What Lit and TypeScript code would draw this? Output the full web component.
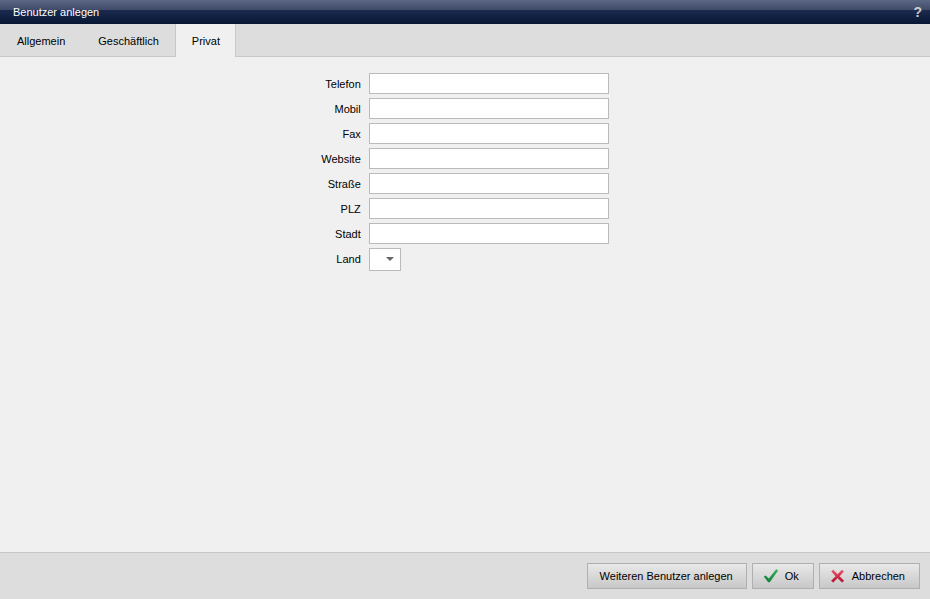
import { LitElement, css, html, svg } from "lit";
import { customElement, state } from "lit/decorators.js";
import { classMap } from "lit/directives/class-map.js";

const TABS = ["Allgemein", "Geschäftlich", "Privat"];

const FIELDS = [
  { id: "phone", label: "Telefon" },
  { id: "mobile", label: "Mobil" },
  { id: "fax", label: "Fax" },
  { id: "website", label: "Website" },
  { id: "street", label: "Straße" },
  { id: "zip", label: "PLZ" },
  { id: "city", label: "Stadt" },
];

const checkIcon = html`<svg class="icon" viewBox="0 0 16 16" aria-hidden="true">
  ${svg`<defs><linearGradient id="green" x1="0" y1="1" x2="1" y2="0">
      <stop offset="0" stop-color="#087c38" /><stop offset="1" stop-color="#3fb25c" />
    </linearGradient></defs>
    <path d="M0.8 8.6 L2.6 7.4 L5.8 10.6 L13.2 1.2 L15.2 2.4 L6.8 14.2 L5.2 14.2 Z" fill="url(#green)" />`}
</svg>`;

const crossIcon = html`<svg class="icon" viewBox="0 0 16 16" aria-hidden="true">
  ${svg`<defs><linearGradient id="red" x1="0" y1="0" x2="0" y2="1">
      <stop offset="0" stop-color="#ec5468" /><stop offset="1" stop-color="#b50c2c" />
    </linearGradient></defs>
    <path d="M1.6 3.4 L3.2 2 L7.6 6.4 L12 2 L13.6 3.4 L9.4 8.2 L13.8 12.8 L12 14.2 L7.6 9.9 L3.2 14.2 L1.4 12.8 L5.8 8.2 Z" fill="url(#red)" stroke="url(#red)" stroke-width="0.5" stroke-linejoin="round" />`}
</svg>`;

@customElement("app-root")
export class AppRoot extends LitElement {
  @state() private active = 2;

  static styles = css`
    :host {
      display: flex;
      flex-direction: column;
      min-height: 100vh;
      background: #f0f0f0;
      color: #000;
      font: 11px/13px "Liberation Sans", Arial, sans-serif;
    }
    * {
      box-sizing: border-box;
    }
    button,
    input,
    select {
      margin: 0;
      font: inherit;
      color: inherit;
      border-radius: 0;
    }
    .titlebar {
      display: flex;
      align-items: center;
      justify-content: space-between;
      height: 24px;
      padding: 0 8px 0 13px;
      color: #fff;
      background: linear-gradient(#5c6784 0%, #3f4a69 42%, #1c2a4f 43%, #061633 100%);
    }
    .title {
      margin: 0;
      font: inherit;
    }
    .help {
      padding: 0;
      border: 0;
      background: none;
      color: #ccc;
      font-size: 14px;
      line-height: 16px;
      font-weight: bold;
    }
    .tabs {
      display: flex;
      height: 33px;
      background: #ddd;
      box-shadow: inset 0 -1px #c8c8c8;
    }
    .tab {
      padding: 2px 15px 0 16px;
      border: 1px solid transparent;
      border-width: 0 1px;
      background: none;
    }
    .tab.active {
      border-color: #c8c8c8;
      background: #f0f0f0;
    }
    .form {
      flex: 1;
      display: grid;
      grid-template-columns: auto 240px;
      gap: 4px 8px;
      align-content: start;
      align-items: start;
      justify-content: center;
      padding: 16px;
    }
    .label {
      padding-top: 5px;
      text-align: right;
    }
    .field {
      width: 100%;
      height: 21px;
      padding: 0 4px;
      border: 1px solid #bbb;
      background: #fff;
    }
    .picker {
      position: relative;
      justify-self: start;
      display: flex;
    }
    .select {
      width: 32px;
      height: 23px;
      padding: 0;
      border: 1px solid #bbb;
      background: #fff;
      appearance: none;
    }
    .arrow {
      position: absolute;
      right: 7px;
      top: 9px;
      width: 8px;
      height: 4px;
      fill: #666;
      pointer-events: none;
    }
    .footer {
      display: flex;
      justify-content: flex-end;
      gap: 5px;
      padding: 10px;
      border-top: 1px solid #c8c8c8;
      background: #ddd;
    }
    .button {
      display: flex;
      align-items: center;
      gap: 6px;
      height: 26px;
      padding: 0 13px 0 12px;
      border: 1px solid #b0b0b0;
      background: linear-gradient(#e8e8e8, #c8c8c8);
    }
    .button.with-icon {
      padding: 0 14px 0 10px;
    }
    .icon {
      width: 16px;
      height: 16px;
    }
  `;

  render() {
    return html`
      <header class="titlebar">
        <h1 class="title">Benutzer anlegen</h1>
        <button class="help" type="button" aria-label="Hilfe">?</button>
      </header>
      <nav class="tabs" role="tablist">
        ${TABS.map(
          (name, i) => html`<button
            type="button"
            role="tab"
            aria-selected=${i === this.active ? "true" : "false"}
            class=${classMap({ tab: true, active: i === this.active })}
            @click=${() => (this.active = i)}
          >${name}</button>`
        )}
      </nav>
      <form class="form">
        ${FIELDS.map(
          (f) => html`<label class="label" for=${f.id}>${f.label}</label>
            <input class="field" type="text" id=${f.id} />`
        )}
        <label class="label" for="country">Land</label>
        <div class="picker">
          <select class="select" id="country"><option></option></select>
          <svg class="arrow" viewBox="0 0 8 4" aria-hidden="true"><path d="M0 0H8L4 4Z" /></svg>
        </div>
      </form>
      <footer class="footer">
        <button class="button" type="button">Weiteren Benutzer anlegen</button>
        <button class="button with-icon" type="button">${checkIcon}Ok</button>
        <button class="button with-icon" type="button">${crossIcon}Abbrechen</button>
      </footer>
    `;
  }
}
